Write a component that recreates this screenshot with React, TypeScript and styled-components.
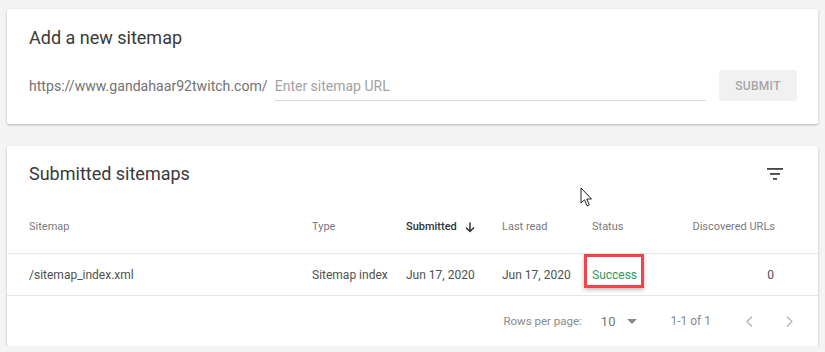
import React from 'react';
import styled, { createGlobalStyle } from 'styled-components';

const GlobalStyle = createGlobalStyle`
  html, body {
    margin: 0;
    padding: 0;
    background: #f4f4f4;
    font-family: Roboto, "Liberation Sans", Arial, sans-serif;
  }
`;

const Page = styled.div`
  display: flex;
  flex-direction: column;
  gap: 22px;
  padding: 9px 7px 0 7px;
  width: 811px;
`;

const Card = styled.div`
  position: relative;
  background: #fff;
  border-radius: 2px;
  box-shadow: 0 1px 3px rgba(0, 0, 0, 0.22), 0 1px 1px rgba(0, 0, 0, 0.06);
`;

const AddCard = styled(Card)`
  padding: 19px 21px 23px 22px;
`;

const Title = styled.div`
  font-size: 18px;
  line-height: 20px;
  color: #3a3a3a;
`;

const InputRow = styled.div`
  display: flex;
  align-items: center;
  margin-top: 22px;
  height: 31px;
`;

const Prefix = styled.span`
  font-size: 14.1px;
  color: #737373;
  margin-right: 7px;
  white-space: nowrap;
`;

const UrlInput = styled.input`
  width: 431px;
  height: 28px;
  margin-top: 2px;
  box-sizing: border-box;
  border: none;
  border-bottom: 1px solid #dcdcdc;
  outline: none;
  padding: 0;
  font-family: inherit;
  font-size: 14px;
  color: #333;
  background: transparent;
  &::placeholder {
    color: #a2a2a2;
  }
`;

const SubmitButton = styled.button`
  margin-left: auto;
  width: 78px;
  height: 31px;
  border: none;
  border-radius: 2px;
  background: #f1f1f1;
  color: #a6a6a6;
  font-family: inherit;
  font-size: 12px;
  font-weight: 500;
  letter-spacing: 0.3px;
`;

const ListCard = styled(Card)`
  padding-top: 18px;
`;

const TitleRow = styled.div`
  display: flex;
  align-items: center;
  justify-content: space-between;
  padding: 0 35px 0 22px;
  height: 20px;
`;

const FilterIcon = () => (
  <svg width="16" height="12" viewBox="0 0 16 12">
    <rect x="0" y="0" width="16" height="1.8" fill="#444" />
    <rect x="3" y="5" width="10" height="1.8" fill="#444" />
    <rect x="6" y="10" width="4" height="1.8" fill="#444" />
  </svg>
);

const TableRow = styled.div<{ $head?: boolean }>`
  display: grid;
  grid-template-columns: 283px 94px 96px 90px 80px 1fr;
  align-items: center;
  height: ${(p) => (p.$head ? '52px' : '41px')};
  padding: 0 43px 0 22px;
  margin-top: ${(p) => (p.$head ? '17px' : '0')};
  border-bottom: 1px solid #e6e6e6;
  font-size: ${(p) => (p.$head ? '11px' : '12px')};
  line-height: 16px;
  color: ${(p) => (p.$head ? '#7a7a7a' : '#505050')};
`;

const HeadCell = styled.div<{ $active?: boolean; $right?: boolean }>`
  display: flex;
  align-items: center;
  gap: 8px;
  justify-content: ${(p) => (p.$right ? 'flex-end' : 'flex-start')};
  color: ${(p) => (p.$active ? '#333' : 'inherit')};
  font-weight: ${(p) => (p.$active ? 500 : 400)};
`;

const Cell = styled.div<{ $right?: boolean }>`
  position: relative;
  text-align: ${(p) => (p.$right ? 'right' : 'left')};
  padding-right: ${(p) => (p.$right ? '1px' : '0')};
`;

const SuccessText = styled.span`
  color: #2f9a5a;
`;

const Highlight = styled.div`
  position: absolute;
  left: -8px;
  top: -13px;
  width: 60px;
  height: 34px;
  box-sizing: border-box;
  border: 3px solid #f2434a;
  box-shadow: 0 2px 4px rgba(0, 0, 0, 0.25);
  pointer-events: none;
`;

const Footer = styled.div`
  display: flex;
  align-items: center;
  justify-content: flex-end;
  height: 50px;
  padding-right: 25px;
  font-size: 11.5px;
  color: #8a8a8a;
`;

const RowsLabel = styled.span`
  margin-right: 19px;
`;

const RowsValue = styled.span`
  display: flex;
  align-items: center;
  gap: 12px;
  margin-right: 33px;
  font-size: 13px;
  color: #777;
`;

const Range = styled.span`
  font-size: 12px;
  margin-right: 35px;
`;

const Pager = styled.span`
  display: flex;
  align-items: center;
  gap: 33px;
`;

const Cursor = styled.svg`
  position: absolute;
  left: 573px;
  top: 41px;
`;

const SortArrow = () => (
  <svg width="10" height="11" viewBox="0 0 10 11">
    <path d="M5 0.5 V9.5 M1 5.5 L5 9.5 L9 5.5" stroke="#333" strokeWidth="1.5" fill="none" />
  </svg>
);

const Caret = () => (
  <svg width="10" height="5" viewBox="0 0 10 5">
    <path d="M0 0 L10 0 L5 5 Z" fill="#8a8a8a" />
  </svg>
);

const Chevron = ({ dir }: { dir: 'left' | 'right' }) => (
  <svg width="7" height="11" viewBox="0 0 7 11">
    <path
      d={dir === 'left' ? 'M6 0.5 L1 5.5 L6 10.5' : 'M1 0.5 L6 5.5 L1 10.5'}
      stroke="#b5b5b5"
      strokeWidth="1.3"
      fill="none"
    />
  </svg>
);

const App = () => {
  return (
    <Page>
      <GlobalStyle />
      <AddCard>
        <Title>Add a new sitemap</Title>
        <InputRow>
          <Prefix>https://www.gandahaar92twitch.com/</Prefix>
          <UrlInput placeholder="Enter sitemap URL" />
          <SubmitButton>SUBMIT</SubmitButton>
        </InputRow>
      </AddCard>
      <ListCard>
        <TitleRow>
          <Title>Submitted sitemaps</Title>
          <FilterIcon />
        </TitleRow>
        <TableRow $head>
          <HeadCell>Sitemap</HeadCell>
          <HeadCell>Type</HeadCell>
          <HeadCell $active>
            Submitted <SortArrow />
          </HeadCell>
          <HeadCell>Last read</HeadCell>
          <HeadCell>Status</HeadCell>
          <HeadCell $right>Discovered URLs</HeadCell>
        </TableRow>
        <TableRow>
          <Cell>/sitemap_index.xml</Cell>
          <Cell>Sitemap index</Cell>
          <Cell>Jun 17, 2020</Cell>
          <Cell>Jun 17, 2020</Cell>
          <Cell>
            <SuccessText>Success</SuccessText>
            <Highlight />
          </Cell>
          <Cell $right>0</Cell>
        </TableRow>
        <Footer>
          <RowsLabel>Rows per page:</RowsLabel>
          <RowsValue>
            10 <Caret />
          </RowsValue>
          <Range>1-1 of 1</Range>
          <Pager>
            <Chevron dir="left" />
            <Chevron dir="right" />
          </Pager>
        </Footer>
        <Cursor width="13" height="21" viewBox="0 0 13 21">
          <path
            d="M1 1 L1 16 L4.5 12.8 L7 18.8 L9.3 17.8 L6.8 12 L11.5 12 Z"
            fill="#fff"
            stroke="#222"
            strokeWidth="1"
            strokeLinejoin="round"
          />
        </Cursor>
      </ListCard>
    </Page>
  );
};

export default App;
